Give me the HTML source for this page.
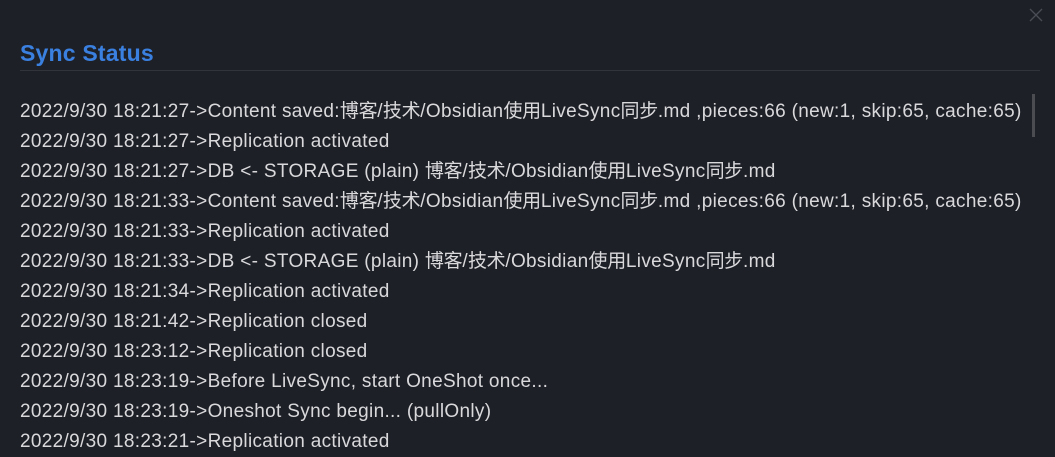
<!DOCTYPE html>
<html><head><meta charset="utf-8"><style>
html,body{margin:0;padding:0;background:#1e2027;width:1055px;height:450px;overflow:hidden;font-family:"Liberation Sans","Noto Sans CJK SC",sans-serif;}
.x{position:absolute;left:1029px;top:8px;width:14px;height:14px;}
h1{position:absolute;left:20px;top:38px;margin:0;font-size:23px;font-weight:bold;color:#3a80e0;line-height:30px;letter-spacing:0.2px;}
.hr{position:absolute;left:20px;top:70px;width:1020px;height:1px;background:#31343b;}
.log{position:absolute;left:20px;top:97px;color:#d9d9dc;font-size:19px;letter-spacing:0.32px;line-height:30px;white-space:nowrap;}
.c{letter-spacing:-0.3px;}
.sb{position:absolute;left:1032px;top:94px;width:3px;height:43px;background:#4a4c52;}
</style></head><body>
<svg class="x" viewBox="0 0 14 14"><path d="M1 1L13 13M13 1L1 13" stroke="#4a4d55" stroke-width="1.3"/></svg>
<h1>Sync Status</h1>
<div class="hr"></div>
<div class="sb"></div>
<div class="log">
2022/9/30 18:21:27-&gt;Content saved:<span class="c">博客</span>/<span class="c">技术</span>/Obsidian<span class="c">使用</span>LiveSync<span class="c">同步</span>.md ,pieces:66 (new:1, skip:65, cache:65)<br>
2022/9/30 18:21:27-&gt;Replication activated<br>
2022/9/30 18:21:27-&gt;DB &lt;- STORAGE (plain) <span class="c">博客</span>/<span class="c">技术</span>/Obsidian<span class="c">使用</span>LiveSync<span class="c">同步</span>.md<br>
2022/9/30 18:21:33-&gt;Content saved:<span class="c">博客</span>/<span class="c">技术</span>/Obsidian<span class="c">使用</span>LiveSync<span class="c">同步</span>.md ,pieces:66 (new:1, skip:65, cache:65)<br>
2022/9/30 18:21:33-&gt;Replication activated<br>
2022/9/30 18:21:33-&gt;DB &lt;- STORAGE (plain) <span class="c">博客</span>/<span class="c">技术</span>/Obsidian<span class="c">使用</span>LiveSync<span class="c">同步</span>.md<br>
2022/9/30 18:21:34-&gt;Replication activated<br>
2022/9/30 18:21:42-&gt;Replication closed<br>
2022/9/30 18:23:12-&gt;Replication closed<br>
2022/9/30 18:23:19-&gt;Before LiveSync, start OneShot once...<br>
2022/9/30 18:23:19-&gt;Oneshot Sync begin... (pullOnly)<br>
2022/9/30 18:23:21-&gt;Replication activated
</div>
</body></html>
